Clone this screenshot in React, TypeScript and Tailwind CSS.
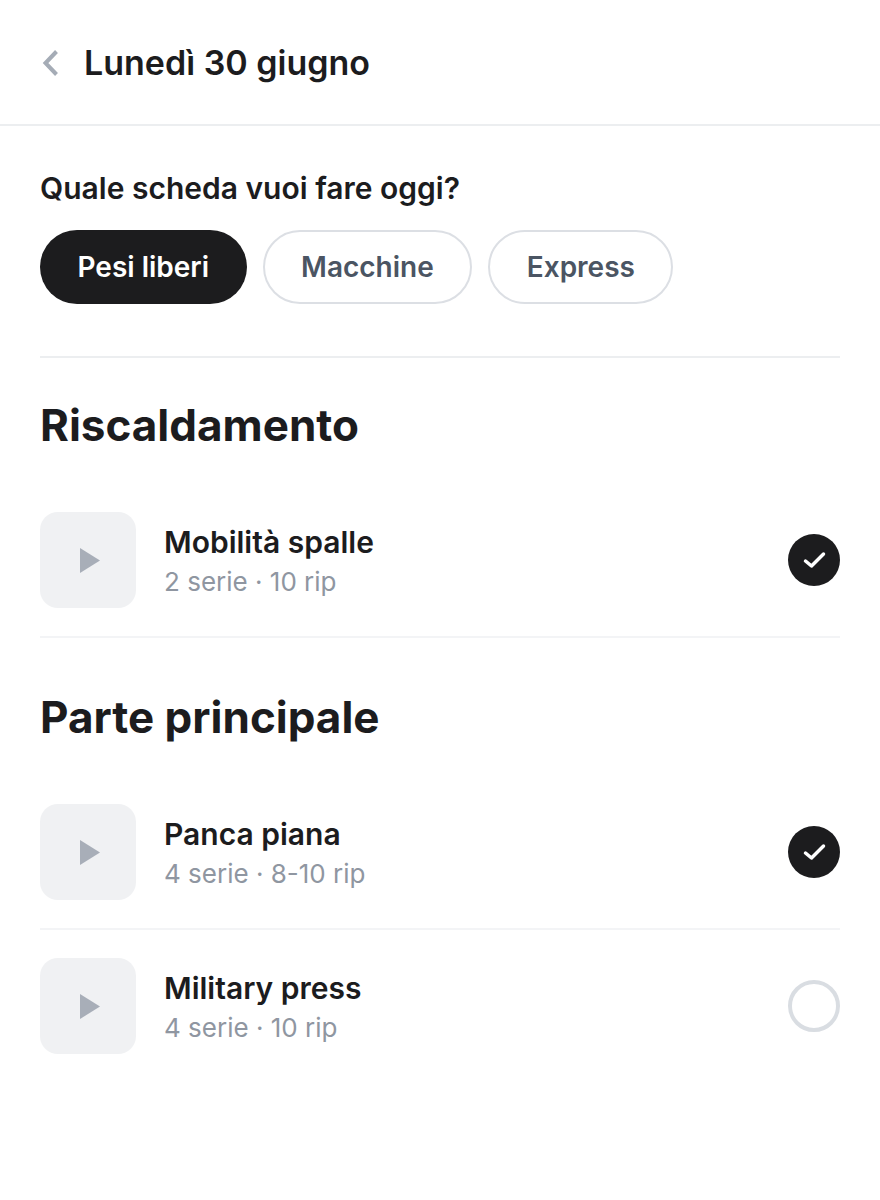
const Play = () => (
  <div className="w-24 h-24 rounded-[18px] bg-[#f0f1f3] flex items-center justify-center shrink-0">
    <svg width="20" height="25" viewBox="0 0 20 25" className="fill-[#a8aeb8] ml-[4px]">
      <path d="M0 0 L20 12.5 L0 25 Z" />
    </svg>
  </div>
);

const Check = ({ done }: { done: boolean }) =>
  done ? (
    <div className="w-[52px] h-[52px] rounded-full bg-[#1c1c1e] flex items-center justify-center">
      <svg width="24" height="24" viewBox="0 0 24 24" fill="none" stroke="white" strokeWidth="3.5" strokeLinecap="round" strokeLinejoin="round">
        <path d="M3.5 13 L9.5 18 L21.5 6" />
      </svg>
    </div>
  ) : (
    <div className="w-[52px] h-[52px] rounded-full border-4 border-[#d9dde2]" />
  );

function Exercise({ name, detail, done, border }: { name: string; detail: string; done: boolean; border?: boolean }) {
  return (
    <div className={`flex items-center pt-[27px] pb-[28px] ${border ? 'mb-px border-b-2 border-[#f3f4f6]' : ''}`}>
      <Play />
      <div className="ml-7 flex-1 pt-[4px]">
        <p className="text-[30px] leading-[40px] font-semibold text-[#1c1c1e]">{name}</p>
        <p className="text-[26px] leading-[40px] text-[#8f96a1]">{detail}</p>
      </div>
      <Check done={done} />
    </div>
  );
}

export default function App() {
  return (
    <div className="w-[880px] h-[1200px] bg-white font-['Inter',sans-serif]">
      {/* Header */}
      <header className="h-[126px] border-b-2 border-[#eceef0] flex items-center px-10">
        <svg width="16" height="26" viewBox="0 0 16 26" fill="none" stroke="#a5acb6" strokeWidth="4" className="ml-[2px] mt-[2px]">
          <path d="M14.5 1.5 L3.5 13 L14.5 24.5" />
        </svg>
        <h1 className="ml-[26px] text-[34px] font-semibold text-[#1c1c1e]">Lunedì 30 giugno</h1>
      </header>
      <div className="px-10">
        <p className="mt-[42px] text-[30px] leading-[40px] font-semibold text-[#1c1c1e]">Quale scheda vuoi fare oggi?</p>
        <div className="flex gap-4 mt-[22px]">
          <div className="h-[74px] px-[37.5px] rounded-full bg-[#1c1c1e] text-white text-[28px] font-semibold flex items-center">Pesi liberi</div>
          <div className="h-[74px] px-[36.5px] rounded-full border-2 border-[#dcdfe4] text-[#4b5563] text-[28px] font-semibold flex items-center">Macchine</div>
          <div className="h-[74px] px-[36.5px] rounded-full border-2 border-[#dcdfe4] text-[#4b5563] text-[28px] font-semibold flex items-center">Express</div>
        </div>
        <div className="mt-[52px] border-b-2 border-[#eceef0]" />
        <h2 className="mt-[39px] text-[44px] leading-[56px] font-bold text-[#1c1c1e]">Riscaldamento</h2>
        <div className="mt-[32px]">
          <Exercise name="Mobilità spalle" detail="2 serie · 10 rip" done border />
        </div>
        <h2 className="mt-[51px] text-[44px] leading-[56px] font-bold text-[#1c1c1e]">Parte principale</h2>
        <div className="mt-[32px]">
          <Exercise name="Panca piana" detail="4 serie · 8-10 rip" done border />
          <Exercise name="Military press" detail="4 serie · 10 rip" done={false} />
        </div>
      </div>
    </div>
  );
}
